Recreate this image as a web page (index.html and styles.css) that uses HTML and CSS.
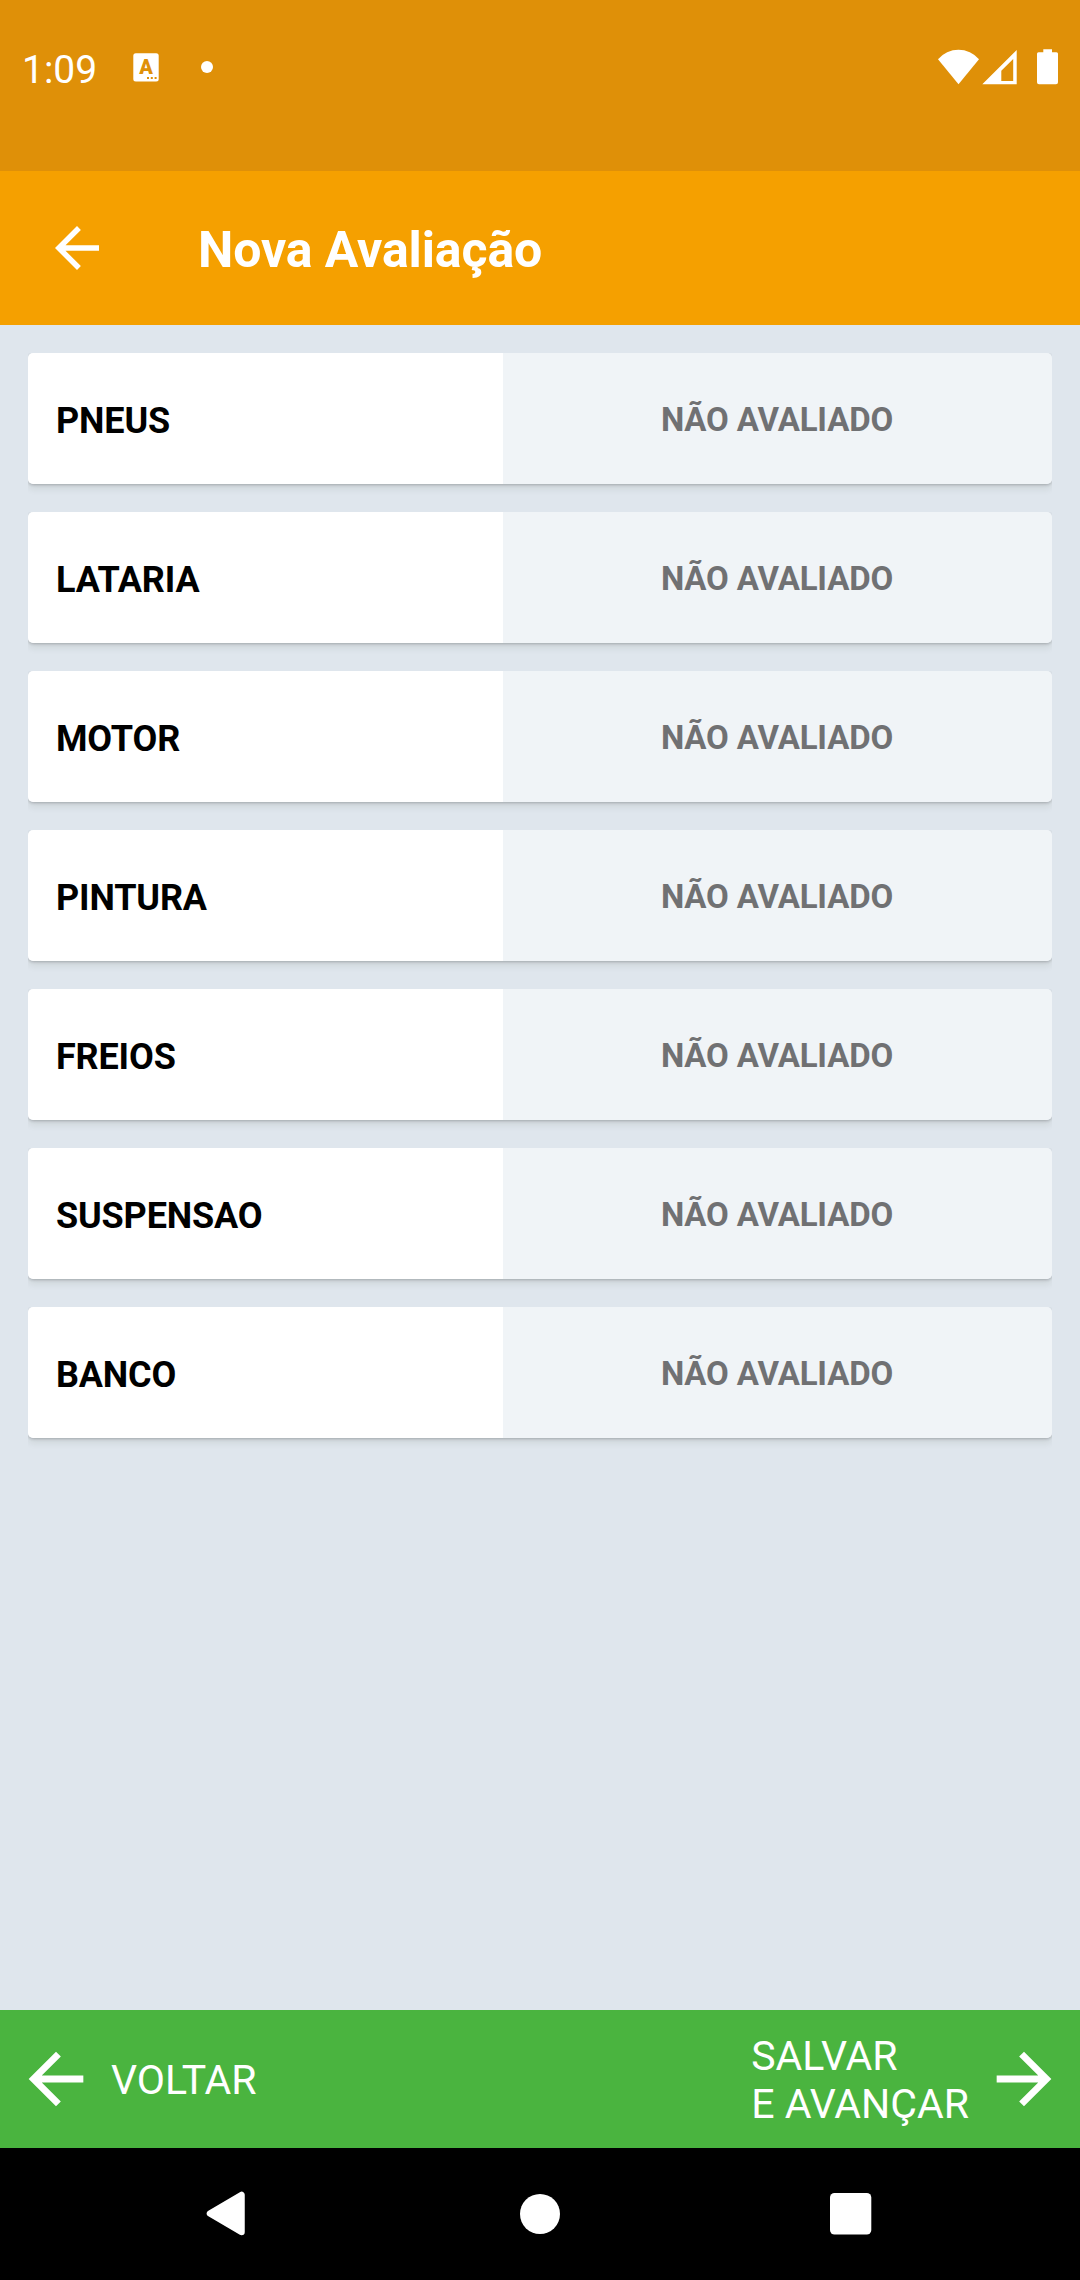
FILE: index.html
```html
<!DOCTYPE html>
<html lang="pt-BR">
<head>
<meta charset="utf-8">
<title>Nova Avaliação</title>
<link rel="stylesheet" href="styles.css">
</head>
<body>
<div class="screen">
  <div class="status">
    <span class="clock">1:09</span>
    <svg class="status-app" width="26" height="29" viewBox="0 0 26 29"><rect x="0.3" y="0.3" width="25.4" height="28.2" rx="2.5" fill="#fff"/><text class="app-letter" x="13" y="20.8" text-anchor="middle">A</text><path d="M14 24h2v2h-2zM17.8 24h2v2h-2zM21.6 24h2v2h-2z" fill="#df9008"/></svg>
    <span class="status-dot"></span>
    <svg class="status-system" width="122" height="36" viewBox="0 0 122 36" fill="#fff"><path d="M21.5 35.3 1 10.3A27 27 0 0 1 42 10.3Z"/><path fill-rule="evenodd" d="M45.3 35.3 79.7 1V35.3ZM64.3 21.7V32H76.2V10Z"/><path d="M106.3 0.3h8.7v3h4.5a1.5 1.5 0 0 1 1.5 1.5v28.5a2 2 0 0 1-2 2h-17a2 2 0 0 1-2-2V4.8a1.5 1.5 0 0 1 1.5-1.5h4.800z"/></svg>
  </div>
  <header class="toolbar">
    <svg class="toolbar-back" width="66" height="66" viewBox="0 0 24 24"><path d="M20 11H7.830l5.590-5.590L12 4l-8 8 8 8 1.410-1.410L7.830 13H20z" fill="#fff"/></svg>
    <h1 class="title">Nova Avaliação</h1>
  </header>
  <main class="list">
    <div class="card"><div class="name">PNEUS</div><div class="state">NÃO AVALIADO</div></div>
    <div class="card"><div class="name">LATARIA</div><div class="state">NÃO AVALIADO</div></div>
    <div class="card"><div class="name">MOTOR</div><div class="state">NÃO AVALIADO</div></div>
    <div class="card"><div class="name">PINTURA</div><div class="state">NÃO AVALIADO</div></div>
    <div class="card"><div class="name">FREIOS</div><div class="state">NÃO AVALIADO</div></div>
    <div class="card"><div class="name">SUSPENSAO</div><div class="state">NÃO AVALIADO</div></div>
    <div class="card"><div class="name">BANCO</div><div class="state">NÃO AVALIADO</div></div>
  </main>
  <footer class="actions">
    <div class="action"><svg width="82" height="82" viewBox="0 0 24 24"><path d="M20 11H7.830l5.590-5.590L12 4l-8 8 8 8 1.410-1.410L7.830 13H20z" fill="#fff"/></svg><span class="action-text">VOLTAR</span></div>
    <div class="action"><span class="action-text">SALVAR<br>E AVANÇAR</span><svg width="82" height="82" viewBox="0 0 24 24"><path d="M4 11h12.170l-5.590-5.590L12 4l8 8-8 8-1.410-1.410L16.170 13H4z" fill="#fff"/></svg></div>
  </footer>
  <nav class="system-nav">
    <svg width="40" height="46" viewBox="0 0 40 46"><path d="M4 22.500 35.500 4V41Z" fill="#fff" stroke="#fff" stroke-width="6.500" stroke-linejoin="round"/></svg>
    <svg class="home" width="40" height="40" viewBox="0 0 40 40"><circle cx="20" cy="20" r="20" fill="#fff"/></svg>
    <svg width="42" height="42" viewBox="0 0 42 42"><rect width="41.300" height="41.500" rx="4.500" fill="#fff"/></svg>
  </nav>
</div>
</body>
</html>
```
FILE: styles.css
```css
* { box-sizing: border-box; }
body { margin: 0; font-family: Roboto, sans-serif; }
svg { display: block; flex: none; }
.screen {
  width: 1080px;
  height: 2280px;
  display: flex;
  flex-direction: column;
  background: #dfe6ed;
}
.status {
  height: 171px;
  display: flex;
  align-items: flex-start;
  padding: 49px 21px 0 22px;
  background: #df9008;
  color: #fff;
}
.clock { width: 111px; padding-top: 1px; font-size: 39px; line-height: 40px; }
.status-app { margin-top: 4px; }
.app-letter { font: 900 20px Roboto, sans-serif; fill: #df9008; }
.status-dot {
  width: 12px;
  height: 12px;
  margin: 12px 0 0 42px;
  border-radius: 50%;
  background: #fff;
}
.status-system { margin-left: auto; }
.toolbar {
  height: 154px;
  display: flex;
  align-items: center;
  padding-left: 44px;
  background: #f5a000;
  color: #fff;
}
.title {
  margin: 4px 0 0 88px;
  font-size: 50px;
  font-weight: 700;
  line-height: 60px;
  letter-spacing: -0.1px;
}
.list {
  flex: 1;
  display: flex;
  flex-direction: column;
  gap: 28px;
  padding: 28px;
}
.card {
  height: 131px;
  display: grid;
  grid-template-columns: 475px 1fr;
  align-items: stretch;
  border-radius: 5px;
  background: linear-gradient(to right, #fff 475px, #f0f4f7 475px);
  box-shadow: 0 1px 3px rgba(0, 0, 0, .22), 0 5px 7px rgba(40, 50, 30, .09);
  clip-path: inset(0 0 -14px 0);
}
.name {
  display: flex;
  align-items: center;
  padding: 5px 0 0 28px;
  color: #000;
  font-size: 36px;
  font-weight: 700;
  letter-spacing: -0.15px;
}
.state {
  display: flex;
  align-items: center;
  justify-content: center;
  padding: 2px 1px 0 0;
  color: #707173;
  font-size: 33px;
  font-weight: 700;
  letter-spacing: -0.15px;
}
.actions {
  height: 138px;
  display: flex;
  align-items: center;
  justify-content: space-between;
  padding: 0 15px;
  background: #4ab43f;
  color: #fff;
}
.action { display: flex; align-items: center; gap: 14px; }
.action-text { font-size: 41px; line-height: 48px; padding-top: 2px; }
.system-nav {
  height: 132px;
  display: flex;
  align-items: center;
  justify-content: space-between;
  padding: 0 208px 0 206px;
  background: #000;
}
.home { margin-left: 4px; }
```
